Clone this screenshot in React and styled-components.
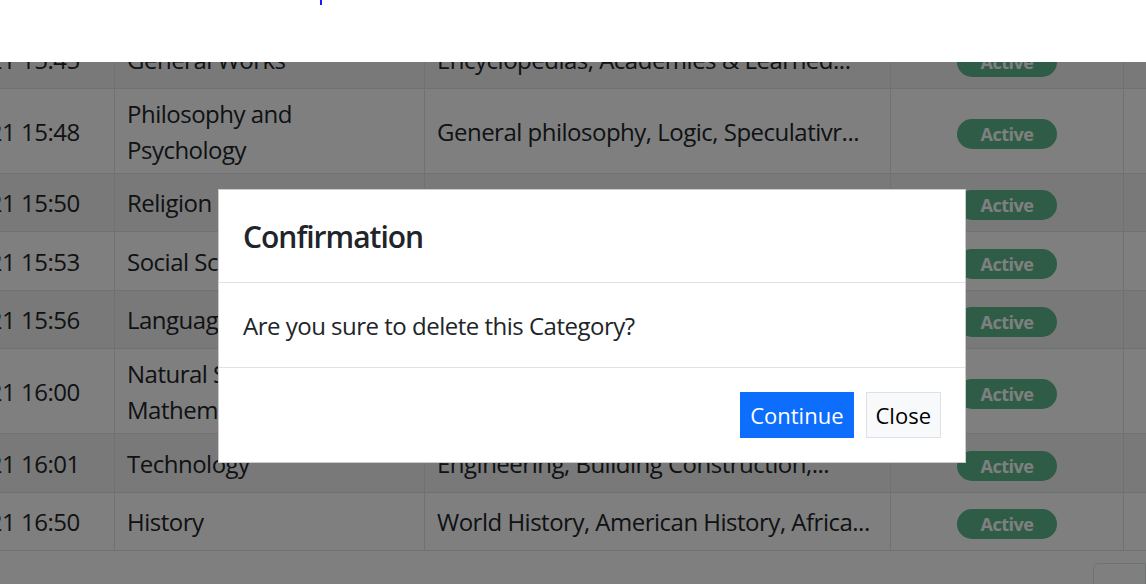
import React from 'react';
import styled, { createGlobalStyle } from 'styled-components';

const categories = [
  { date: '06-08-2021 15:45', name: 'General Works', desc: 'Encyclopedias, Academies & Learned...' },
  { date: '06-08-2021 15:48', name: 'Philosophy and Psychology', desc: 'General philosophy, Logic, Speculativr...' },
  { date: '06-08-2021 15:50', name: 'Religion', desc: 'Bible, Christian theology, Christian...' },
  { date: '06-08-2021 15:53', name: 'Social Sciences', desc: 'Statistics, Political Science, Economics...' },
  { date: '06-08-2021 15:56', name: 'Language', desc: 'Linguistics, English, German, French...' },
  { date: '06-08-2021 16:00', name: 'Natural Sciences and Mathematics', desc: 'Astronomy, Physics, Chemistry, Earth...' },
  { date: '06-08-2021 16:01', name: 'Technology', desc: 'Engineering, Building Construction,...' },
  { date: '06-08-2021 16:50', name: 'History', desc: 'World History, American History, Africa...' },
];

const App = () => {
  return (
    <>
      <GlobalStyle />
      <TopBar>
        <NavMark />
      </TopBar>
      <Page>
        <Table>
          <colgroup>
            <col style={{ width: 232 }} />
            <col style={{ width: 310 }} />
            <col style={{ width: 466 }} />
            <col style={{ width: 233 }} />
            <col style={{ width: 260 }} />
          </colgroup>
          <tbody>
            {categories.map((category) => (
              <Row key={category.name}>
                <Cell>{category.date}</Cell>
                <Cell>{category.name}</Cell>
                <DescCell>{category.desc}</DescCell>
                <StatusCell>
                  <Badge>Active</Badge>
                </StatusCell>
                <ActionCell>
                  <SmallBtn>Edit</SmallBtn>
                  <SmallBtn>Delete</SmallBtn>
                </ActionCell>
              </Row>
            ))}
          </tbody>
        </Table>
        <Pager>
          <PageLink />
        </Pager>
      </Page>
      <Backdrop>
        <Dialog role="dialog">
          <DialogHeader>
            <DialogTitle>Confirmation</DialogTitle>
          </DialogHeader>
          <DialogBody>Are you sure to delete this Category?</DialogBody>
          <DialogFooter>
            <Button variant="primary">Continue</Button>
            <Button variant="light">Close</Button>
          </DialogFooter>
        </Dialog>
      </Backdrop>
    </>
  );
};

export default App;

const GlobalStyle = createGlobalStyle`
  *, *::before, *::after {
    box-sizing: border-box;
  }
  html, body {
    margin: 0;
    height: 100%;
    overflow: hidden;
  }
  body {
    font-family: "Open Sans", "Noto Sans", sans-serif;
    font-size: 24px;
    line-height: 1.5;
    letter-spacing: -0.5px;
    color: #212529;
    background: #fff;
  }
`;

const TopBar = styled.header`
  position: fixed;
  top: 0;
  left: 0;
  right: 0;
  height: 62px;
  background: #fff;
  z-index: 1100;
  padding-left: 320px;
`;

const NavMark = styled.span`
  display: block;
  width: 2px;
  height: 5px;
  background: #1a1aff;
`;

const Page = styled.main`
  padding-top: 29px;
`;

const Table = styled.table`
  table-layout: fixed;
  border-collapse: collapse;
  width: 1501px;
  margin-left: -118px;
`;

const Row = styled.tr`
  &:nth-child(odd) td {
    background: #f2f2f2;
  }
`;

const Cell = styled.td`
  border: 1px solid #dee2e6;
  padding: 7px 12px 5px;
  vertical-align: middle;
  background: #fff;
`;

const DescCell = styled(Cell)`
  white-space: nowrap;
  overflow: hidden;
`;

const StatusCell = styled(Cell)`
  text-align: center;
`;

const ActionCell = styled(Cell)`
  text-align: center;
  white-space: nowrap;
`;

const SmallBtn = styled.button`
  font: inherit;
  height: 45.5px;
  padding: 0 10px;
  margin: 0 3px;
  border: 1px solid #0d6efd;
  background: #0d6efd;
  color: #fff;
`;

const Badge = styled.span`
  display: inline-block;
  padding: 6px 24px;
  font-size: 18px;
  font-weight: 700;
  line-height: 1;
  color: #fff;
  background: #5cb88c;
  border-radius: 50rem;
`;

const Pager = styled.nav`
  display: flex;
  margin: 12px 0 0 1093px;
`;

const PageLink = styled.span`
  display: block;
  width: 60px;
  height: 54px;
  border: 1px solid #dee2e6;
  border-radius: 6px 0 0 6px;
  background: #fff;
`;

const Backdrop = styled.div`
  position: fixed;
  inset: 0;
  z-index: 1050;
  background: rgba(0, 0, 0, 0.5);
  display: flex;
  justify-content: center;
  align-items: flex-start;
  padding: 189px 0 0 38px;
`;

const Dialog = styled.div`
  width: 748px;
  background: #fff;
  border: 1px solid rgba(0, 0, 0, 0.2);
`;

const DialogHeader = styled.div`
  padding: 23.5px 24px;
  border-bottom: 1px solid #dee2e6;
`;

const DialogTitle = styled.h5`
  margin: 0;
  font-size: 30px;
  font-weight: 600;
  letter-spacing: -1px;
  line-height: 45px;
  color: #212529;
`;

const DialogBody = styled.div`
  padding: 25px 24px 23px;
  line-height: 36px;
`;

const DialogFooter = styled.div`
  display: flex;
  justify-content: flex-end;
  gap: 12px;
  padding: 24px;
  border-top: 1px solid #dee2e6;
`;

const Button = styled.button`
  font: inherit;
  font-size: 22px;
  line-height: 36px;
  height: 46px;
  padding: 0 9px;
  border-radius: 0;
  cursor: pointer;
  border: 1px solid ${(p) => (p.variant === 'primary' ? '#0d6efd' : '#dee2e6')};
  background: ${(p) => (p.variant === 'primary' ? '#0d6efd' : '#f8f9fa')};
  color: ${(p) => (p.variant === 'primary' ? '#fff' : '#000')};
`;
